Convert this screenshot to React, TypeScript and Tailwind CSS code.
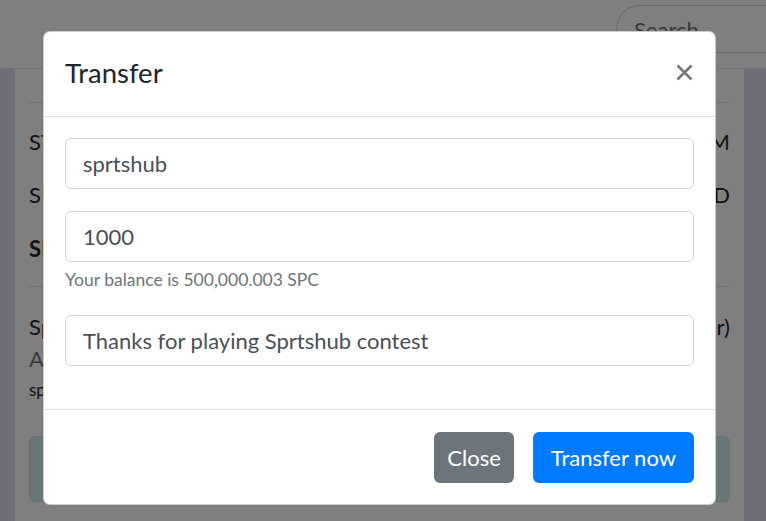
import React from "react";

function Row({ left, right, bold, className }: { left: string; right?: string; bold?: boolean; className?: string }) {
  return (
    <div className={`flex items-center justify-between ${className ?? ""}`}>
      <span className={`text-[22px] text-[#212529] ${bold ? "font-bold" : ""}`}>{left}</span>
      {right && <span className="text-[22px] text-[#212529]">{right}</span>}
    </div>
  );
}

export default function App() {
  return (
    <div className="relative h-[521px] w-[766px] overflow-hidden bg-white font-['Lato',sans-serif]">
      {/* navbar */}
      <div className="relative z-10 flex h-[69px] items-start justify-end border-b border-[#dee2e6] bg-white pt-[5px]">
        <div className="flex h-[48px] w-[150px] items-center rounded-l-full border border-r-0 border-[#ced4da] pl-[17px] text-[22px] text-[#6c757d]">
          Search
        </div>
      </div>
      {/* page body */}
      <div className="flex h-[452px]">
        <div className="w-[15px] bg-[#dcdef0]" />
        <div className="flex flex-1 flex-col px-[14px]">
          <div className="-mt-[26px] h-[60px] border-b border-[#dee2e6] text-[28px] font-bold leading-[30px] text-[#212529]">
            Wallet
          </div>
          <Row className="mt-[23px] h-[30px]" left="STEEM" right="1,000.000 STEEM" />
          <Row className="mt-[23px] h-[30px]" left="SBD" right="0.000 SBD" />
          <Row className="mt-[24px] h-[30px]" bold left="SPC" />
          <div className="mt-[23px] border-b border-[#dee2e6]" />
          <Row className="mt-[24px] h-[30px]" left="Sprtshub" right="(Contest Organizer)" />
          <div className="mt-[3px] text-[22px] leading-[30px] text-[#6c757d]">Account</div>
          <div className="mt-[3px] text-[17px] leading-[26px] text-[#212529]">sprtshub</div>
          <div className="mt-[33px] h-[66px] rounded-[6px] border border-[#bee5eb] bg-[#d1ecf1]" />
        </div>
        <div className="w-[22px] bg-[#dcdef0]" />
      </div>

      {/* backdrop */}
      <div className="absolute inset-0 z-20 bg-black/50" />

      {/* modal */}
      <div className="absolute left-[43px] top-[31px] z-30 w-[673px] rounded-[7px] border border-black/20 bg-white">
        <div className="flex h-[85px] items-center justify-between border-b border-[#dee2e6] px-[21px] pb-[4px]">
          <h5 className="text-[27.5px] leading-[41px] text-[#212529]">Transfer</h5>
          <button className="flex h-[20px] w-[20px] items-center justify-center">
            <svg width="17" height="17" viewBox="0 0 17 17">
              <path d="M1.5 1.5 L15.5 15.5 M15.5 1.5 L1.5 15.5" stroke="#777" strokeWidth="2.6" strokeLinecap="butt" />
            </svg>
          </button>
        </div>
        <div className="flex flex-col px-[21px] pb-[43px] pt-[21px]">
          <div className="flex h-[51px] items-center rounded-[6px] border border-[#ced4da] px-[17px] text-[22px] text-[#495057]">
            sprtshub
          </div>
          <div className="mt-[22px] flex h-[51px] items-center rounded-[6px] border border-[#ced4da] px-[17px] text-[22px] text-[#495057]">
            1000
          </div>
          <div className="mt-[5px] text-[17.5px] leading-[26px] text-[#6c757d]">Your balance is 500,000.003 SPC</div>
          <div className="mt-[22px] flex h-[51px] items-center rounded-[6px] border border-[#ced4da] px-[17px] text-[22px] text-[#495057]">
            Thanks for playing Sprtshub contest
          </div>
        </div>
        <div className="flex justify-end gap-[19px] border-t border-[#dee2e6] p-[21px] pt-[22px]">
          <button className="flex h-[51px] items-center rounded-[6px] bg-[#6c757d] px-[13px] text-[22px] text-white">
            Close
          </button>
          <button className="flex h-[51px] items-center rounded-[6px] bg-[#007bff] px-[18px] text-[22px] text-white">
            Transfer now
          </button>
        </div>
      </div>
    </div>
  );
}
